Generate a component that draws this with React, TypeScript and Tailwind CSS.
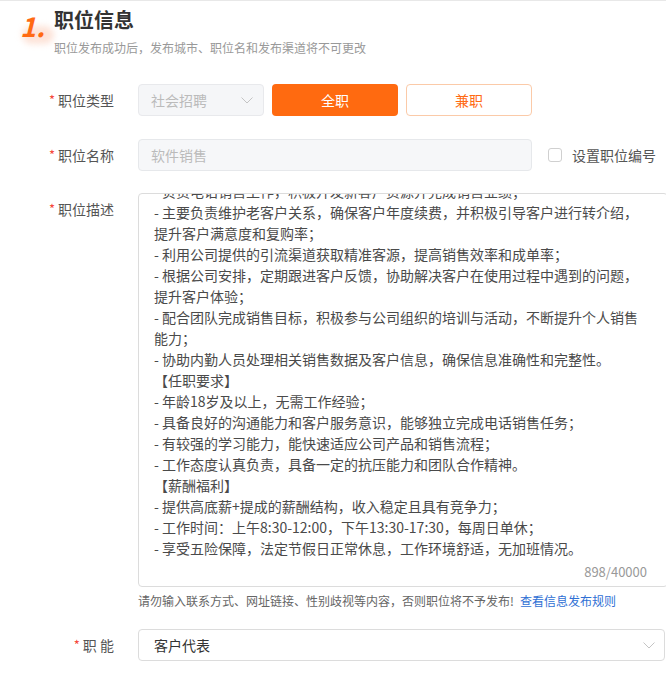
const descLines = [
  '- 负责电话销售工作，积极开发新客户资源并完成销售业绩；',
  '- 主要负责维护老客户关系，确保客户年度续费，并积极引导客户进行转介绍，',
  '提升客户满意度和复购率；',
  '- 利用公司提供的引流渠道获取精准客源，提高销售效率和成单率；',
  '- 根据公司安排，定期跟进客户反馈，协助解决客户在使用过程中遇到的问题，',
  '提升客户体验；',
  '- 配合团队完成销售目标，积极参与公司组织的培训与活动，不断提升个人销售',
  '能力；',
  '- 协助内勤人员处理相关销售数据及客户信息，确保信息准确性和完整性。',
  '【任职要求】',
  '- 年龄18岁及以上，无需工作经验；',
  '- 具备良好的沟通能力和客户服务意识，能够独立完成电话销售任务；',
  '- 有较强的学习能力，能快速适应公司产品和销售流程；',
  '- 工作态度认真负责，具备一定的抗压能力和团队合作精神。',
  '【薪酬福利】',
  '- 提供高底薪+提成的薪酬结构，收入稳定且具有竞争力；',
  '- 工作时间：上午8:30-12:00，下午13:30-17:30，每周日单休；',
  '- 享受五险保障，法定节假日正常休息，工作环境舒适，无加班情况。',
];

function Chevron() {
  return (
    <svg width="12" height="7" viewBox="0 0 12 7" fill="none">
      <polyline points="0.5 0.5 6 6 11.5 0.5" stroke="#c4c4c4" strokeWidth="1" />
    </svg>
  );
}

function Label({ children }: { children: React.ReactNode }) {
  return (
    <div className="w-[114px] h-[32px] shrink-0 flex items-center justify-end text-[14px] text-[#555]">
      <span className="text-[#f5483b] mr-[3px] text-[13px]">*</span>
      {children}
    </div>
  );
}

export default function App() {
  return (
    <div className="w-[666px] h-[678px] overflow-hidden bg-white border-t border-[#e8e8e8] font-['Noto_Sans_CJK_SC','Microsoft_YaHei',sans-serif]">
      {/* header */}
      <div className="flex pt-[5px]">
        <div className="relative w-[54px] shrink-0">
          <div className="absolute left-[22px] top-[20px] w-[32px] h-[18px] rounded-full bg-[#fde3d8] blur-[3px]" />
          <span className="absolute left-[20px] top-[6px] text-[27px] leading-none font-bold italic text-[#ff6a13]">1.</span>
        </div>
        <div>
          <div className="text-[20px] leading-[28px] font-bold text-[#333]">职位信息</div>
          <div className="mt-[6px] text-[12px] leading-[16px] text-[#999]">职位发布成功后，发布城市、职位名和发布渠道将不可更改</div>
        </div>
      </div>

      {/* 职位类型 */}
      <div className="flex mt-[28px]">
        <Label>职位类型</Label>
        <div className="ml-[24px] flex gap-[8px]">
          <div className="w-[126px] h-[32px] rounded-[4px] border border-[#e8e9ec] bg-[#f5f6f8] flex items-center justify-between pl-[12px] pr-[10px] text-[14px] text-[#bbb]">
            社会招聘
            <Chevron />
          </div>
          <button className="w-[126px] h-[32px] rounded-[4px] bg-[#ff6a10] text-white text-[14px]">全职</button>
          <button className="w-[126px] h-[32px] rounded-[4px] border border-[#fbcaa8] bg-white text-[#ff6a13] text-[14px]">兼职</button>
        </div>
      </div>

      {/* 职位名称 */}
      <div className="flex mt-[23px]">
        <Label>职位名称</Label>
        <div className="ml-[24px] w-[394px] h-[32px] rounded-[4px] border border-[#e6e8eb] bg-[#f6f7f9] flex items-center pl-[12px] text-[14px] text-[#bbb]">
          软件销售
        </div>
        <label className="ml-[16px] flex items-center text-[14px] text-[#555]">
          <span className="w-[14px] h-[14px] rounded-[3px] border border-[#d0d0d0] bg-white" />
          <span className="ml-[10px]">设置职位编号</span>
        </label>
      </div>

      {/* 职位描述 */}
      <div className="flex mt-[22px]">
        <Label>职位描述</Label>
        <div className="ml-[24px]">
          <div className="relative w-[530px] h-[394px] rounded-[4px] border border-[#dcdcdc] bg-white overflow-hidden">
            <div className="-mt-[13px] pl-[15px] text-[14px] leading-[21px] text-[#4a4a4a]">
              {descLines.map((l, i) => (
                <div key={i} className="whitespace-nowrap">{l}</div>
              ))}
            </div>
            <span className="absolute right-[20px] bottom-[4px] text-[13px] leading-[20px] text-[#999]">898/40000</span>
          </div>
          <div className="mt-[6px] text-[12px] leading-[16px] text-[#666]">
            请勿输入联系方式、网址链接、性别歧视等内容，否则职位将不予发布!
            <a className="ml-[6px] text-[#2f6fd4]">查看信息发布规则</a>
          </div>
        </div>
      </div>

      {/* 职能 */}
      <div className="flex mt-[20px]">
        <Label>职 能</Label>
        <div className="ml-[24px] w-[527px] h-[32px] rounded-[4px] border border-[#dcdcdc] bg-white flex items-center justify-between pl-[15px] pr-[9px] text-[14px] text-[#333]">
          客户代表
          <Chevron />
        </div>
      </div>
    </div>
  );
}
